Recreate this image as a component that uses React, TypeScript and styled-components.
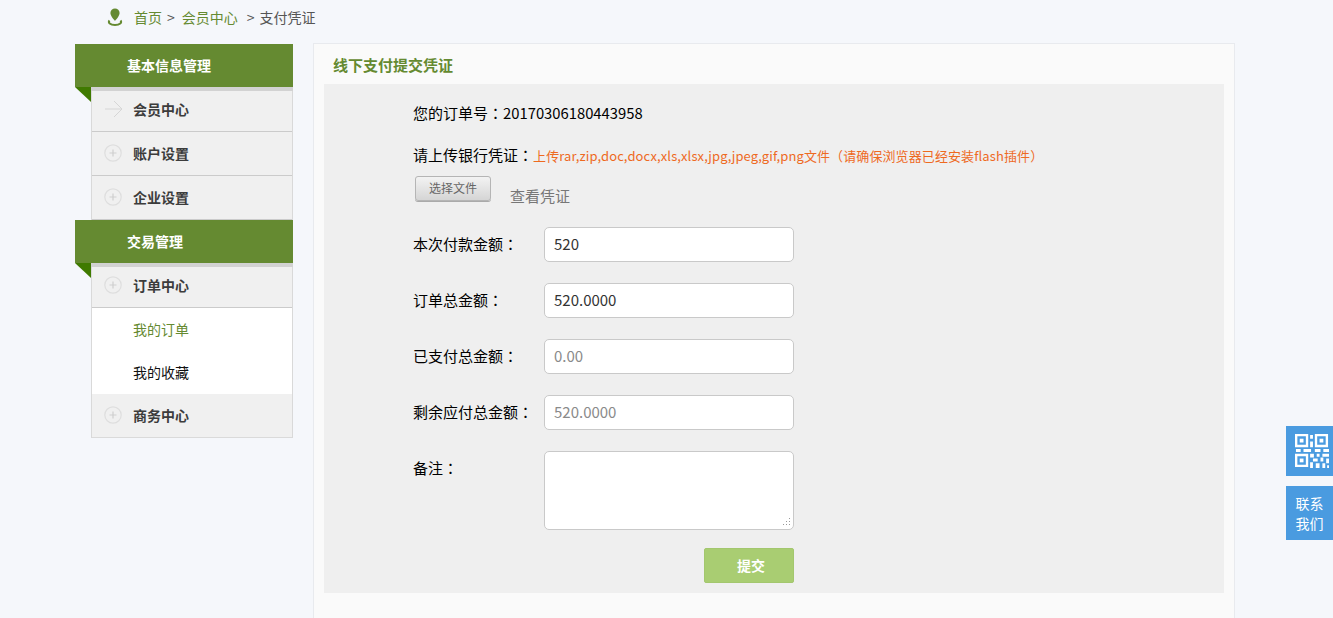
import React from "react";
import styled, { createGlobalStyle } from "styled-components";

const Global = createGlobalStyle`
  html, body { margin: 0; padding: 0; height: 618px; overflow: hidden; background: #f5f7fb; }
  body { font-family: "Noto Sans CJK SC", "Open Sans", sans-serif; color: #000; }
  * { box-sizing: border-box; }
`;
const Page = styled.div`width: 1333px; height: 618px; overflow: hidden; padding-left: 75px;`;
const Breadcrumb = styled.div`
  height: 43px; padding: 7px 0 0 32px; display: flex; align-items: flex-start;
  font-size: 14px; line-height: 20px; color: #555;
  svg { margin-right: 11px; }
`;
const CrumbLink = styled.span`color: #658a31;`;
const Sep = styled.span`margin: 0 ${p => p.$r}px 0 ${p => p.$l}px;`;
const Columns = styled.div`display: flex; align-items: flex-start;`;
const Sidebar = styled.aside`width: 218px; margin-right: 20px; padding-top: 1px;`;
const SectionTitle = styled.div`
  position: relative; height: 43px; background: #658a31; color: #fff; font-size: 14px; font-weight: 700;
  line-height: 43px; padding-left: 52px;
  &::after {
    content: ""; position: absolute; left: 0; top: 43px; width: 0; height: 0;
    border-top: 15px solid #3f7a00; border-left: 16px solid transparent;
  }
`;
const Group = styled.div`margin-left: 16px; border-left: 1px solid #d9d9d9; border-right: 1px solid #d9d9d9;`;
const Band = styled.div`height: 4px; background: #d2d2d2; margin: 0 -1px;`;
const Item = styled.div`
  display: flex; align-items: center; background: #f0f0f0; height: ${p => p.$h ?? 44}px;
  border-bottom: 1px solid ${p => p.$soft ? "#dadada" : "#cbcbcb"};
  padding: 0 0 ${p => p.$h ? 5 : 2}px 12px; font-size: 14px; font-weight: 700; color: #3c3c3c;
  svg { margin-right: 11px; flex: none; }
`;
const ArrowIcon = styled.svg`&& { margin-right: 9px; }`;
const SubItem = styled.div`
  height: ${p => p.$h}px; background: #fff; padding-left: 41px; line-height: ${p => p.$h}px; font-size: 14px;
  color: ${p => p.$active ? "#658a31" : "#111"};
`;
const Panel = styled.main`
  width: 922px; height: 600px; background: #fafafa; border: 1px solid #e8eaee; padding: 0 10px;
`;
const PanelTitle = styled.h2`
  margin: 0; height: 40px; padding-left: 9px; font-size: 15px; line-height: 41px; font-weight: 700; color: #658a31;
`;
const Body = styled.div`width: 900px; height: 509px; background: #efefef; padding: 17px 0 0 89px; font-size: 15px;`;
const Line = styled.div`line-height: 24px; height: 24px; white-space: nowrap;`;
const Punct = styled.span`font-family: "Noto Sans CJK TC", sans-serif;`;
const OrderNo = styled.span`font-size: 14.8px;`;
const UploadLine = styled(Line)`margin-top: 18px;`;
const Hint = styled.span`color: #ee6a1f; font-size: 13px; letter-spacing: 0.1px;`;
const FileRow = styled.div`display: flex; align-items: flex-start; height: 51px; margin-top: 9px; margin-left: 2px;`;
const FileButton = styled.div`
  width: 76px; height: 25px; border: 1px solid #b5b5b5; border-radius: 3px;
  background: linear-gradient(#f3f3f3, #d5d5d5); color: #666; font-size: 12px; line-height: 22px; text-align: center;
  box-shadow: 0 1px 0 #aaa;
`;
const ViewLink = styled.span`margin: 9px 0 0 19px; font-size: 15px; line-height: 22px; color: #777;`;
const FormRow = styled.div`display: flex; align-items: flex-start; height: 35px; margin-bottom: 21px;`;
const Label = styled.label`width: 131px; flex: none; line-height: 33px; white-space: nowrap;`;
const Input = styled.div`
  width: 250px; height: 35px; border: 1px solid #c9c9c9; border-radius: 5px; background: #fff;
  padding-left: 9px; line-height: 31px; font-size: 15px; color: ${p => p.$muted ? "#8a8a8a" : "#333"};
`;
const NoteRow = styled.div`display: flex; align-items: flex-start; height: 79px;`;
const TextBox = styled.div`
  position: relative; width: 250px; height: 79px; border: 1px solid #c9c9c9; border-radius: 5px; background: #fff;
  svg { position: absolute; right: 2px; bottom: 2px; }
`;
const SubmitRow = styled.div`display: flex; justify-content: flex-end; width: 381px; margin-top: 18px;`;
const Submit = styled.div`
  width: 90px; height: 35px; border-radius: 2px; background: #a9cd72; border: 1px solid #a3c76e; padding-left: 4px;
  color: #fff; font-size: 14px; font-weight: 700; text-align: center; line-height: 33px;
`;
const FloatTab = styled.div`
  position: fixed; right: 0; width: 47px; background: #4a9be0; color: #fff;
  display: flex; align-items: center; justify-content: center;
  top: ${p => p.$top}px; height: ${p => p.$h}px; font-size: 14px; line-height: 20px; text-align: center;
`;
const QrIcon = styled.svg`margin-left: 5px;`;

const Arrow = () => (
  <ArrowIcon width="20" height="18" viewBox="0 0 20 18" fill="none" stroke="#d6d6d6" strokeWidth="1">
    <path d="M1 9h17M10 1l8 8-8 8" />
  </ArrowIcon>
);
const Plus = () => (
  <svg width="18" height="18" viewBox="0 0 18 18" fill="none" stroke="#dedede" strokeWidth="1.2">
    <circle cx="9" cy="9" r="8.2" />
    <path d="M9 5.5v7M5.5 9h7" stroke="#cfcfcf" />
  </svg>
);
const Pin = () => (
  <svg width="16" height="20" viewBox="0 0 16 20">
    <path d="M8 1.5a4.6 4.6 0 0 0-4.6 4.6C3.4 9.3 8 14 8 14s4.6-4.7 4.6-7.9A4.6 4.6 0 0 0 8 1.5z" fill="#658a31" />
    <path d="M2.5 13.5C.8 15.6 3 18 8 18s7.200-2.400 5.500-4.500" fill="none" stroke="#658a31" strokeWidth="2" />
  </svg>
);
const Finder = ({ x, y }: { x: number; y: number }) => (
  <g transform={`translate(${x} ${y})`}>
    <path fillRule="evenodd" d="M0 0h14v14H0zM2.500 2.500v9h9v-9z" fill="#fff" />
    <rect x="5" y="5" width="4" height="4" fill="#fff" />
  </g>
);
const Qr = () => (
  <QrIcon width="34" height="34" viewBox="0 0 36 36">
    <Finder x={0} y={0} />
    <Finder x={21} y={0} />
    <Finder x={0} y={21} />
    <path fill="#fff" d="M16 1h3v4h-3zM16 8h3v6h-3zM1 16h5v3H1zM9 16h8v3H9zM21 16h6v3h-6zM30 16h6v3h-6zM16 21h4v4h-4zM23 21h3v3h-3zM29 21h7v3h-7zM19 26h5v3h-5zM27 25h3v4h-3zM33 26h3v5h-3zM16 30h3v6h-3zM22 31h4v5h-4zM29 31h3v5h-3zM34 33h2v3h-2z" />
  </QrIcon>
);
const Colon = () => <Punct>：</Punct>;

export default function App() {
  return (
    <Page>
      <Global />
      <Breadcrumb>
        <Pin />
        <CrumbLink>首页</CrumbLink><Sep $l={5} $r={7}>&gt;</Sep><CrumbLink>会员中心</CrumbLink><Sep $l={9} $r={5}>&gt;</Sep>支付凭证
      </Breadcrumb>
      <Columns>
        <Sidebar>
          <SectionTitle>基本信息管理</SectionTitle>
          <Group>
            <Band />
            <Item $h={41}><Arrow />会员中心</Item>
            <Item><Plus />账户设置</Item>
            <Item><Plus />企业设置</Item>
          </Group>
          <SectionTitle>交易管理</SectionTitle>
          <Group>
            <Band />
            <Item $h={41}><Plus />订单中心</Item>
            <SubItem $h={43} $active>我的订单</SubItem>
            <SubItem $h={43}>我的收藏</SubItem>
            <Item $soft><Plus />商务中心</Item>
          </Group>
        </Sidebar>
        <Panel>
          <PanelTitle>线下支付提交凭证</PanelTitle>
          <Body>
            <Line>您的订单号<Colon /><OrderNo>20170306180443958</OrderNo></Line>
            <UploadLine>请上传银行凭证<Colon /><Hint>上传rar,zip,doc,docx,xls,xlsx,jpg,jpeg,gif,png文件<Punct>（</Punct>请确保浏览器已经安装flash插件<Punct>）</Punct></Hint></UploadLine>
            <FileRow><FileButton>选择文件</FileButton><ViewLink>查看凭证</ViewLink></FileRow>
            <FormRow><Label>本次付款金额<Colon /></Label><Input>520</Input></FormRow>
            <FormRow><Label>订单总金额<Colon /></Label><Input>520.0000</Input></FormRow>
            <FormRow><Label>已支付总金额<Colon /></Label><Input $muted>0.00</Input></FormRow>
            <FormRow><Label>剩余应付总金额<Colon /></Label><Input $muted>520.0000</Input></FormRow>
            <NoteRow>
              <Label>备注<Colon /></Label>
              <TextBox>
                <svg width="9" height="9" viewBox="0 0 9 9" fill="#999">
                  <path d="M7 0h1v1H7zM7 3h1v1H7zM4 3h1v1H4zM7 6h1v1H7zM4 6h1v1H4zM1 6h1v1H1z" />
                </svg>
              </TextBox>
            </NoteRow>
            <SubmitRow><Submit>提交</Submit></SubmitRow>
          </Body>
        </Panel>
      </Columns>
      <FloatTab $top={426} $h={50}><Qr /></FloatTab>
      <FloatTab $top={486} $h={54}>联系<br />我们</FloatTab>
    </Page>
  );
}
